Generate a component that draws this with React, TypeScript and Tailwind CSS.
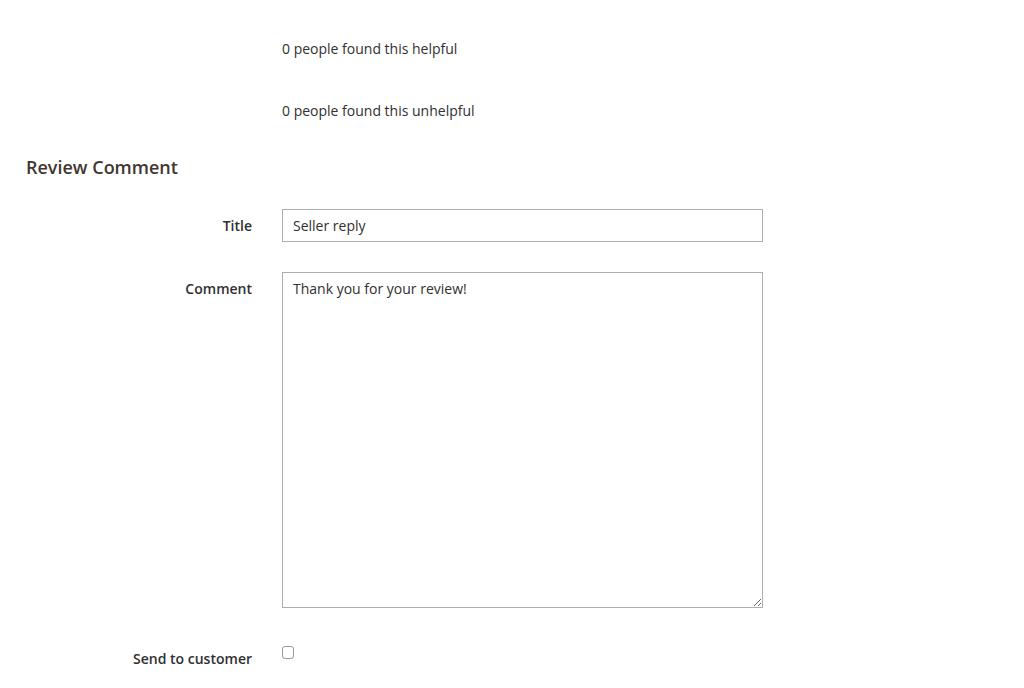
import React from "react";

const App: React.FC = () => {
  return (
    <div
      className="w-[1024px] h-[688px] bg-white text-[#303030] text-[14px] overflow-hidden"
      style={{ fontFamily: '"Open Sans", "Liberation Sans", sans-serif' }}
    >
      <div className="pl-[26px] pt-[39px]">
        <div className="flex">
          <div className="w-[226px]" />
          <div className="ml-[30px] leading-[20px]">0 people found this helpful</div>
        </div>
        <div className="flex mt-[42px]">
          <div className="w-[226px]" />
          <div className="ml-[30px] leading-[20px]">0 people found this unhelpful</div>
        </div>

        <h2 className="mt-[34px] text-[18px] leading-[25px] font-semibold text-[#41362f]">
          Review Comment
        </h2>

        <div className="flex items-center mt-[29px]">
          <label className="w-[226px] text-right font-semibold leading-[20px] pt-[1px]">Title</label>
          <input
            type="text"
            defaultValue="Seller reply"
            className="ml-[30px] w-[481px] h-[33px] border border-[#adadad] px-[10px] text-[14px] text-[#303030] outline-none"
          />
        </div>

        <div className="flex mt-[30px]">
          <label className="w-[226px] text-right font-semibold leading-[20px] pt-[7px]">Comment</label>
          <textarea
            defaultValue="Thank you for your review!"
            className="ml-[30px] w-[481px] h-[336px] border border-[#adadad] px-[10px] py-[6px] text-[14px] leading-[20px] text-[#303030] outline-none resize"
          />
        </div>

        <div className="flex mt-[39px]">
          <label className="w-[226px] text-right font-semibold leading-[20px] pt-[2px]">Send to customer</label>
          <div className="ml-[30px] pt-[0px] -mt-[1px]">
            <input
              type="checkbox"
              className="appearance-none block w-[12px] h-[13px] border border-[#999] rounded-[3px] bg-white"
            />
          </div>
        </div>
      </div>
    </div>
  );
};

export default App;
